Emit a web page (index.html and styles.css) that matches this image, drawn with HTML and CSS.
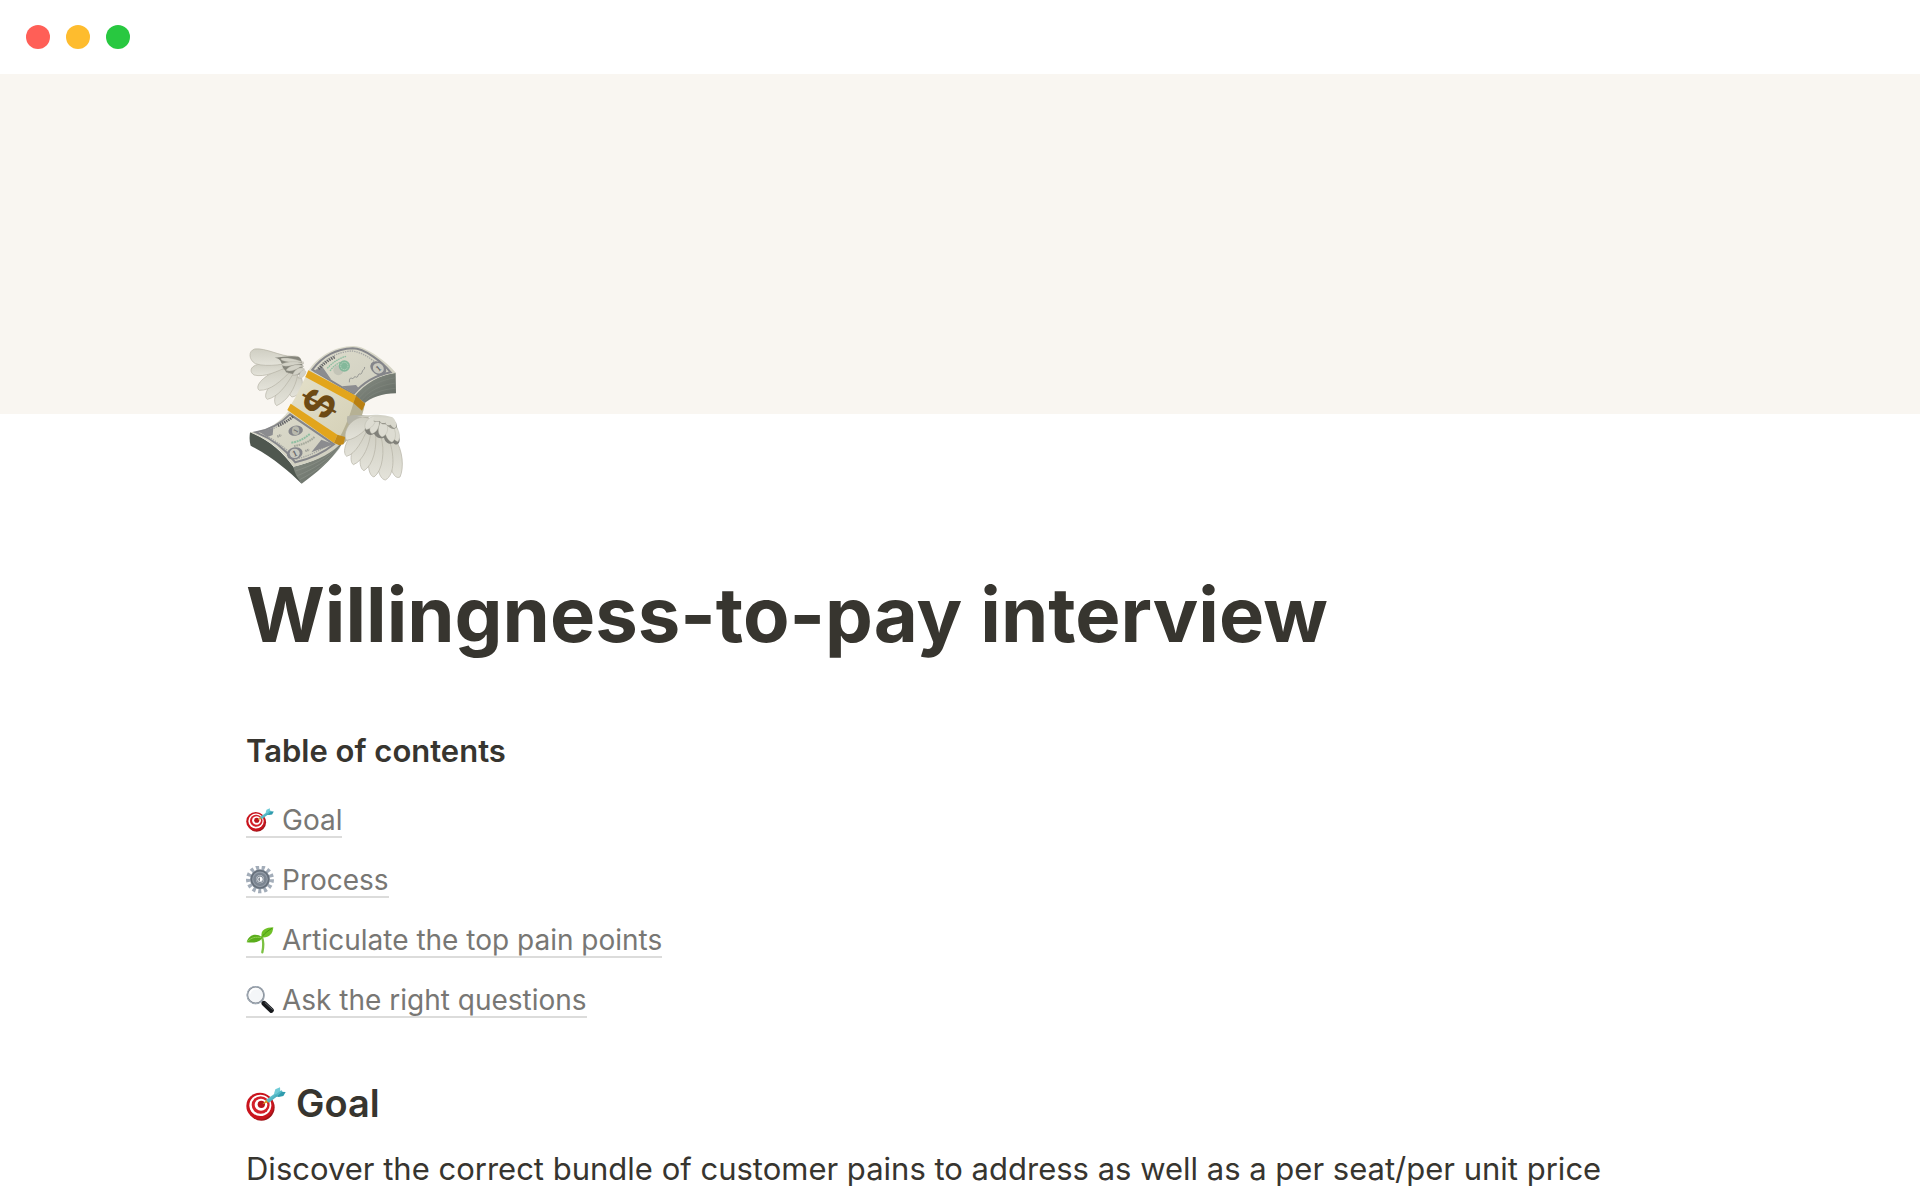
FILE: index.html
```html
<!DOCTYPE html>
<html lang="en">
<head>
  <meta charset="UTF-8">
  <meta name="viewport" content="width=device-width, initial-scale=1.0">
  <title>Willingness-to-pay interview</title>
  <link rel="stylesheet" href="styles.css">
</head>
<body>
  <!-- shared icons -->
  <svg class="sprite" aria-hidden="true">
    <defs>
      <linearGradient id="rim" x1="0" y1="0" x2="1" y2="1">
        <stop offset="0" stop-color="#e03a3a"/>
        <stop offset="1" stop-color="#8e0a10"/>
      </linearGradient>
      <linearGradient id="dart" x1="0" y1="0" x2="1" y2="1">
        <stop offset="0" stop-color="#7fdde6"/>
        <stop offset="1" stop-color="#2a93a5"/>
      </linearGradient>
      <symbol id="target" viewBox="0 0 120 120">
        <ellipse cx="46" cy="70" rx="40" ry="40" fill="url(#rim)"/>
        <ellipse cx="42" cy="66" rx="41" ry="40" fill="#c9141d"/>
        <ellipse cx="43" cy="64" rx="33" ry="32" fill="#fff"/>
        <ellipse cx="44" cy="63" rx="27" ry="26" fill="#d3202a"/>
        <ellipse cx="45" cy="62" rx="19" ry="18" fill="#fff"/>
        <ellipse cx="46" cy="61" rx="11" ry="11" fill="#b9131c"/>
        <path d="M49 61 L62 47 L69 54 Z" fill="#d99a22"/>
        <path d="M60 47 L89 27 L96 35 L68 56 Z" fill="url(#dart)"/>
        <path d="M84 29 L88 16 L102 10 L103 24 L96 33 Z" fill="#6fcbd6"/>
        <path d="M88 36 L103 23 L119 24 L112 36 L98 39 Z" fill="#2f9bad"/>
        <path d="M87 33 L106 19 L110 22 L94 36 Z" fill="#50b8c6"/>
      </symbol>
    </defs>
  </svg>

  <header class="titlebar">
    <span class="dot red"></span>
    <span class="dot yellow"></span>
    <span class="dot green"></span>
  </header>

  <div class="cover"></div>

  <main class="page">
    <svg class="page-icon" viewBox="48 33 480 480" role="img" aria-label="Money with wings">
      <defs>
        <linearGradient id="paper" x1="0" y1="0" x2="1" y2="1">
          <stop offset="0" stop-color="#dddccc"/>
          <stop offset="1" stop-color="#cfcebf"/>
        </linearGradient>
        <linearGradient id="stack" x1="0" y1="0" x2="1" y2="1">
          <stop offset="0" stop-color="#8d9389"/>
          <stop offset="1" stop-color="#5f665f"/>
        </linearGradient>
        <linearGradient id="feather" x1="0" y1="0" x2="0" y2="1">
          <stop offset="0" stop-color="#cfcec2"/>
          <stop offset="1" stop-color="#e4e3da"/>
        </linearGradient>
        <linearGradient id="wrap" x1="0" y1="0" x2="1" y2="1">
          <stop offset="0" stop-color="#e5e1ca"/>
          <stop offset="1" stop-color="#d3cfb6"/>
        </linearGradient>
      </defs>

      <!-- left wing -->
      <g fill="url(#feather)" stroke="#b3b1a3" stroke-width="2">
        <path d="M215 160 C222 185 212 212 186 216 C172 208 174 180 192 152 Z"/>
        <path d="M203 150 C196 190 172 228 140 242 C126 230 136 196 172 150 Z"/>
        <path d="M190 146 C166 185 145 215 112 223 C98 214 112 180 160 142 Z"/>
        <path d="M185 136 C150 170 124 196 88 196 C74 186 92 156 150 132 Z"/>
        <path d="M180 122 C140 140 104 158 72 150 C54 138 64 118 96 117 C120 114 160 112 180 116 Z"/>
        <path d="M212 104 C170 118 112 128 76 116 C56 104 54 78 74 72 C108 68 150 94 186 94 C200 92 212 96 212 104 Z"/>
      </g>
      <path d="M134 98 C156 102 150 112 158 118 C154 130 166 132 168 142 L192 148 L216 150 C220 124 218 104 206 96 C184 90 160 96 134 98 Z" fill="#85857b"/>
      <g fill="#d3d2c7" stroke="#a9a89b" stroke-width="1">
        <path d="M222 112 C206 106 178 96 154 100 C146 106 172 112 190 112 Z"/>
        <path d="M222 116 C200 106 166 110 154 118 C158 128 184 122 204 118 Z"/>
        <path d="M222 124 C200 114 178 122 168 136 C180 142 200 134 210 126 Z"/>
        <path d="M224 132 C210 122 192 136 188 150 C202 152 212 142 220 136 Z"/>
        <path d="M226 138 C218 128 206 144 206 160 C218 160 226 150 228 140 Z"/>
      </g>

      <!-- upper half of the stack -->
      <path d="M497 143 L498 205 C456 206 424 216 400 238 L366 214 C404 172 446 150 497 143 Z" fill="url(#stack)"/>
      <g fill="none" stroke="#8c9389" stroke-width="1">
        <path d="M497 158 C448 166 414 184 386 220"/>
        <path d="M497 174 C452 180 418 196 394 226"/>
        <path d="M497 190 C454 193 422 206 400 232"/>
      </g>
      <path d="M235 137 C262 96 312 64 370 63 C408 62 472 112 498 144 C450 150 408 172 372 216 Z" fill="url(#paper)"/>
      <path d="M247 134 C276 96 318 72 368 70 C404 70 458 112 482 142 C440 150 404 168 370 207 Z" fill="none" stroke="#85868a" stroke-width="6"/>
      <path d="M258 136 C284 102 324 80 364 78 C400 80 444 114 464 140" fill="none" stroke="#a4a5a3" stroke-width="4" stroke-dasharray="4 3"/>
      <path d="M250 140 L276 124 L304 164 Z M336 184 L378 180 L386 190 L371 206 Z" fill="#8b8c8f"/>
      <circle cx="325" cy="136" r="15" fill="#c3c4b7"/>
      <circle cx="343" cy="123" r="17" fill="#83b89a"/>
      <circle cx="343" cy="123" r="11" fill="none" stroke="#b7d2bd" stroke-width="3" stroke-dasharray="4 2"/>
      <ellipse cx="445" cy="130" rx="26" ry="19" transform="rotate(35 445 130)" fill="#84858a"/>
      <ellipse cx="445" cy="130" rx="17" ry="15" transform="rotate(35 445 130)" fill="#c9c9bf"/>
      <text class="bill-mark" x="445" y="139" font-size="26" text-anchor="middle" transform="rotate(-40 445 130)">1</text>
      <g fill="none">
        <path d="M292 130 C306 114 326 100 348 94 M300 138 C308 126 318 118 330 112" stroke="#8fbea1" stroke-width="4" stroke-dasharray="5 2"/>
        <path d="M266 132 C280 116 296 104 316 96" stroke="#5e5f61" stroke-width="8" stroke-dasharray="4 3"/>
        <path d="M358 172 C358 150 368 164 370 160 C376 148 380 164 384 152 C388 140 392 154 396 142 C398 132 404 136 404 126" stroke="#77787a" stroke-width="2"/>
      </g>

      <!-- lower half of the stack -->
      <path d="M60 322 C112 342 156 378 190 425 L215 476 C176 438 130 398 62 362 C58 350 58 338 60 322 Z" fill="#4f574f"/>
      <path d="M190 425 C244 412 292 392 322 356 L334 360 C302 408 260 444 215 476 C204 460 194 446 190 425 Z" fill="url(#stack)"/>
      <g fill="none" stroke="#a1a79d" stroke-width="1">
        <path d="M196 438 C246 422 292 400 326 362"/>
        <path d="M202 452 C248 434 294 406 328 366"/>
        <path d="M209 464 C252 442 294 414 330 368"/>
      </g>
      <path d="M60 322 C112 318 150 292 176 258 L328 360 C294 394 244 412 190 425 C158 376 112 342 60 322 Z" fill="url(#paper)"/>
      <path d="M78 322 C120 314 154 294 180 268 L312 358 C280 384 240 402 196 412 C164 370 124 340 78 322 Z" fill="none" stroke="#85868a" stroke-width="6"/>
      <path d="M98 323 C132 312 158 298 182 278 M104 330 C144 350 172 376 200 402 C236 392 266 380 292 360" fill="none" stroke="#a4a5a3" stroke-width="4" stroke-dasharray="4 3"/>
      <path d="M88 321 L130 308 L128 330 L112 336 Z M244 382 L274 344 L312 358 Z" fill="#8b8c8f"/>
      <ellipse cx="197" cy="317" rx="22" ry="15" transform="rotate(-12 197 317)" fill="#85868a"/>
      <ellipse cx="197" cy="317" rx="11" ry="13" fill="#b9baae"/>
      <ellipse cx="194" cy="385" rx="24" ry="18" transform="rotate(-15 194 385)" fill="#84858a"/>
      <ellipse cx="194" cy="385" rx="15" ry="14" fill="#c9c9bf"/>
      <text class="bill-mark" x="194" y="394" font-size="26" text-anchor="middle" transform="rotate(-25 194 385)">1</text>
      <text class="bill-mark" x="197" y="324" font-size="20" text-anchor="middle" transform="rotate(-60 197 317)">1</text>
      <g fill="none">
        <path d="M144 302 C160 296 174 287 190 274" stroke="#5e5f61" stroke-width="8" stroke-dasharray="4 3"/>
        <path d="M184 353 C206 350 222 342 240 326" stroke="#8fbea1" stroke-width="6" stroke-dasharray="6 2"/>
        <path d="M192 363 C214 360 236 352 254 336" stroke="#a5a99c" stroke-width="6" stroke-dasharray="5 2"/>
        <path d="M142 335 L154 330 M226 378 L238 374" stroke="#9b9c96" stroke-width="7" stroke-dasharray="4 2"/>
      </g>

      <!-- paper band -->
      <path d="M235 137 L376 212 L390 240 L330 358 L318 356 L172 255 C198 220 216 176 235 137 Z" fill="url(#wrap)"/>
      <path d="M376 212 L405 234 C398 282 374 322 340 358 L318 356 C346 310 364 262 376 212 Z" fill="#b6b194"/>
      <path d="M235 136 L378 212 L370 234 L226 156 Z" fill="#e2a51c"/>
      <path d="M378 212 L406 236 L396 257 L370 234 Z" fill="#b98012"/>
      <path d="M182 236 L322 329 L312 354 L172 255 Z" fill="#e2a51c"/>
      <path d="M322 329 L346 336 L340 358 L328 361 L312 354 Z" fill="#c48b17"/>
      <text class="bill-sign" x="267" y="280" font-size="122" text-anchor="middle" transform="rotate(-62 267 235)">$</text>

      <!-- right wing -->
      <path d="M352 274 C374 268 400 270 420 274 L380 310 C362 308 346 296 352 274 Z" fill="#b5b4a8"/>
      <g fill="url(#feather)" stroke="#b3b1a3" stroke-width="2">
        <path d="M494 340 C520 376 522 430 510 456 C494 464 478 440 466 350 Z"/>
        <path d="M474 336 C494 384 496 450 466 465 C444 462 434 410 442 330 Z"/>
        <path d="M452 332 C466 376 458 438 432 456 C410 450 412 400 424 326 Z"/>
        <path d="M436 324 C442 366 430 420 402 437 C384 430 386 380 408 322 Z"/>
        <path d="M422 320 C420 358 400 408 370 419 C354 408 366 352 398 314 Z"/>
        <path d="M412 314 C398 344 378 386 350 394 C336 384 344 342 388 304 Z"/>
        <path d="M430 282 C412 312 384 340 350 346 C336 330 354 282 398 276 Z"/>
      </g>
      <path d="M404 312 C408 330 420 334 432 326 C440 340 452 342 462 338 C466 354 480 360 490 354 C502 366 512 352 508 340 L498 292 L440 276 Z" fill="#81817a"/>
      <g fill="#dddcd2" stroke="#aaa99c" stroke-width="1">
        <path d="M484 290 C508 308 514 336 504 350 C490 346 476 326 472 300 Z"/>
        <path d="M478 292 C500 310 502 342 486 352 C468 346 462 318 462 298 Z"/>
        <path d="M466 290 C478 306 474 330 456 336 C440 328 444 304 452 290 Z"/>
        <path d="M448 284 C450 306 440 322 426 326 C412 318 422 294 438 282 Z"/>
        <path d="M440 278 C436 296 424 312 408 314 C398 300 412 278 430 274 Z"/>
      </g>
      <path d="M430 288 C438 294 446 286 452 294 C460 302 466 294 472 302 C482 312 498 318 500 302 L490 282 L448 274 Z" fill="#99988e"/>
      <g fill="#d9d8cd">
        <ellipse cx="442" cy="281" rx="12" ry="8"/>
        <ellipse cx="460" cy="284" rx="11" ry="10"/>
        <ellipse cx="476" cy="288" rx="10" ry="13"/>
        <ellipse cx="488" cy="292" rx="9" ry="18" transform="rotate(-25 488 292)"/>
      </g>
      <path d="M380 276 C420 266 468 268 488 278 C470 280 430 274 380 276 Z" fill="#d4d3c8"/>
    </svg>

    <h1 class="page-title">Willingness-to-pay interview</h1>

    <nav class="toc" aria-labelledby="toc-title">
      <h3 id="toc-title" class="toc-title">Table of contents</h3>
      <ul class="toc-list">
        <li>
          <a class="toc-link" href="#goal">
            <svg class="emoji" aria-hidden="true"><use href="#target"/></svg>
            Goal
          </a>
        </li>
        <li>
          <a class="toc-link" href="#process">
            <svg class="emoji" viewBox="0 0 84 84" aria-hidden="true">
              <circle cx="42" cy="40" r="35" fill="none" stroke="#a3adb9" stroke-width="14" pathLength="26" stroke-dasharray="1.1 0.9"/>
              <circle cx="42" cy="40" r="30" fill="#949da8"/>
              <circle cx="42" cy="40" r="26" fill="none" stroke="#66707b" stroke-width="5"/>
              <circle cx="42" cy="40" r="20" fill="#7b8591"/>
              <circle cx="42" cy="40" r="12" fill="#d2d8df"/>
              <circle cx="42" cy="40" r="10" fill="none" stroke="#5d6671" stroke-width="2"/>
              <circle cx="43" cy="39" r="6" fill="#fff"/>
              <path d="M41 34 C36 37 36 43 41 46 Z" fill="#4f5863"/>
            </svg>
            Process
          </a>
        </li>
        <li>
          <a class="toc-link" href="#pain-points">
            <svg class="emoji" viewBox="0 0 84 84" aria-hidden="true">
              <path d="M48 34 C53 46 53 60 49 79" fill="none" stroke="#7bc142" stroke-width="7" stroke-linecap="round"/>
              <path d="M2 49 C8 26 30 20 49 34 C42 52 20 50 2 49 Z" fill="#5aad1c"/>
              <path d="M4 47 C16 34 30 32 46 35" fill="none" stroke="#8fd04e" stroke-width="3"/>
              <path d="M47 34 C42 12 60 4 82 4 C80 26 68 36 47 34 Z" fill="#6fc027"/>
              <path d="M49 31 C58 20 66 14 78 7" fill="none" stroke="#469a12" stroke-width="3"/>
            </svg>
            Articulate the top pain points
          </a>
        </li>
        <li>
          <a class="toc-link" href="#questions">
            <svg class="emoji" viewBox="0 0 84 84" aria-hidden="true">
              <path d="M46 44 L56 54" stroke="#9a9ea6" stroke-width="7"/>
              <path d="M54 52 L76 73" stroke="#17191c" stroke-width="15" stroke-linecap="round"/>
              <path d="M57 50 L79 70" stroke="#656a70" stroke-width="3" stroke-linecap="round"/>
              <circle cx="29" cy="27" r="25" fill="#f4f6f8" stroke="#7f868f" stroke-width="5"/>
              <circle cx="29" cy="27" r="26" fill="none" stroke="#b9c5d1" stroke-width="2"/>
              <path d="M12 22 C15 12 24 8 34 9" fill="none" stroke="#fff" stroke-width="4" stroke-linecap="round"/>
            </svg>
            Ask the right questions
          </a>
        </li>
      </ul>
    </nav>

    <section id="goal">
      <h2 class="section-title">
        <svg class="emoji" aria-hidden="true"><use href="#target"/></svg>
        Goal
      </h2>
      <p class="text">Discover the correct bundle of customer pains to address as well as a per seat/per unit price</p>
    </section>
  </main>
</body>
</html>
```
FILE: styles.css
```css
body {
  margin: 0;
  background-color: #ffffff;
  color: #37352f;
  font-family: Inter, "Liberation Sans", sans-serif;
}

.sprite {
  position: absolute;
  width: 0;
  height: 0;
}

.titlebar {
  display: flex;
  align-items: center;
  gap: 16px;
  height: 74px;
  padding: 0 26px;
}

.dot {
  width: 24px;
  height: 24px;
  border-radius: 50%;
}

.red {
  background-color: #ff5f57;
}

.yellow {
  background-color: #febc2e;
}

.green {
  background-color: #28c840;
}

.cover {
  height: 340px;
  background-color: #f9f6f1;
}

.page {
  padding: 0 246px;
}

.page-icon {
  display: block;
  position: relative;
  width: 160px;
  height: 160px;
  margin-top: -78px;
}

.bill-mark {
  font-family: "Liberation Serif", serif;
  font-weight: bold;
  fill: #6b6c6f;
}

.bill-sign {
  font-family: Inter, sans-serif;
  font-weight: bold;
  fill: #6d4a14;
}

.page-title {
  margin: 70px 0 0;
  font-size: 76px;
  line-height: 96px;
  font-weight: 700;
}

.toc-title {
  margin: 68px 0 0;
  font-size: 31px;
  line-height: 42px;
  font-weight: 600;
}

.toc-list {
  margin: 19px 0 0;
  padding: 0;
  list-style: none;
}

.toc-list li {
  display: flex;
  padding: 13px 0;
}

.toc-link {
  display: flex;
  align-items: center;
  gap: 8px;
  border-bottom: 2px solid #dcdcdb;
  color: #787774;
  font-size: 28px;
  line-height: 32px;
  text-decoration: none;
}

.emoji {
  flex: none;
  width: 28px;
  height: 28px;
}

.section-title {
  display: flex;
  align-items: center;
  gap: 10px;
  margin: 46px 0 0;
  font-size: 38px;
  line-height: 52px;
  font-weight: 600;
}

.section-title .emoji {
  width: 40px;
  height: 40px;
  margin-top: 2px;
}

.text {
  margin: 16px 0 0;
  font-size: 31px;
  line-height: 48px;
}
```
